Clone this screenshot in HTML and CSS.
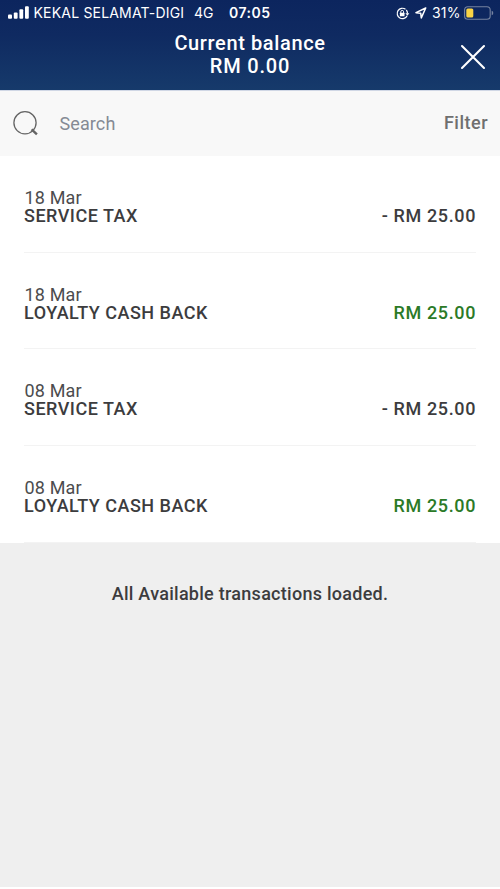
FILE: index.html
```html
<!DOCTYPE html>
<html lang="en">
<head>
<meta charset="utf-8">
<title>Transactions</title>
<link rel="stylesheet" href="styles.css">
</head>
<body>
<div class="app">
  <header class="header">
    <div class="status">
      <svg class="signal" width="21" height="13" viewBox="0 0 21 13" fill="#fff"><rect x="0" y="8.5" width="4" height="4.2" rx="1"/><rect x="5.8" y="6.4" width="3.8" height="6.3" rx="1"/><rect x="11.4" y="3.3" width="3.8" height="9.4" rx="1"/><rect x="17" y="0.2" width="3.8" height="12.5" rx="1"/></svg>
      <span class="carrier">KEKAL SELAMAT-DIGI</span>
      <span class="network">4G</span>
      <span class="time">07:05</span>
      <span class="indicators">
        <svg width="14" height="13" viewBox="0 0 14 13" fill="none"><path d="M11.1 8.7A5.2 5.2 0 1 1 9.5 2.3M10.3 3A5.2 5.2 0 0 1 11.5 6.5" stroke="#fff" stroke-width="1.2"/><path d="M9.4 6.2h3.9l-1.9 2.5z" fill="#fff"/><rect x="3.9" y="5.7" width="4.6" height="3.6" rx=".5" fill="#fff"/><path d="M4.8 6V4.8a1.4 1.4 0 0 1 2.8 0V6" stroke="#fff"/></svg>
        <svg class="arrow" width="12" height="12" viewBox="0 0 12 12"><path d="M10.7 1 1 5.7l4.7.5.6 4.7z" fill="none" stroke="#fff" stroke-width="1.5" stroke-linejoin="round"/></svg>
        <span class="percent">31%</span>
        <svg width="30" height="14" viewBox="0 0 30 14"><rect x=".6" y=".8" width="25.6" height="12.4" rx="3.3" fill="none" stroke="#7583a0" stroke-width="1.1"/><rect x="2.3" y="2.5" width="7" height="9" rx="1.5" fill="#fad445"/><path d="M27.7 4.8q1.6.5 1.6 2.2t-1.6 2.2z" fill="#7583a0"/></svg>
      </span>
    </div>
    <div class="titlebar">
      <div class="title"><div class="title-label">Current balance</div><div class="title-value">RM 0.00</div></div>
      <svg class="close" width="26" height="26" viewBox="0 0 26 26"><path d="M2 2 24 24M24 2 2 24" stroke="#fff" stroke-width="2.1" stroke-linecap="round"/></svg>
    </div>
  </header>
  <div class="search">
    <svg width="26" height="26" viewBox="0 0 26 26" fill="none" stroke="#646464"><circle cx="12" cy="11.8" r="11.1" stroke-width="1.3"/><path d="m18.6 18.4 5.3 5" stroke-width="2.4"/></svg>
    <span class="search-text">Search</span>
    <span class="filter">Filter</span>
  </div>
  <main class="list">
    <div class="row"><div><div class="date">18 Mar</div><div class="name">SERVICE TAX</div></div><div class="amount">- RM 25.00</div></div>
    <div class="row"><div><div class="date">18 Mar</div><div class="name">LOYALTY CASH BACK</div></div><div class="amount credit">RM 25.00</div></div>
    <div class="row"><div><div class="date">08 Mar</div><div class="name">SERVICE TAX</div></div><div class="amount">- RM 25.00</div></div>
    <div class="row"><div><div class="date">08 Mar</div><div class="name">LOYALTY CASH BACK</div></div><div class="amount credit">RM 25.00</div></div>
  </main>
  <footer class="footer">All Available transactions loaded.</footer>
</div>
</body>
</html>
```
FILE: styles.css
```css
* { box-sizing: border-box; }
body { margin: 0; background: #fff; font-family: Roboto, sans-serif; color: #3c3c3e; }
svg { display: block; flex: none; }
.app { width: 500px; height: 889px; display: flex; flex-direction: column; white-space: nowrap; overflow: hidden; }
.header { height: 91px; flex: none; background: linear-gradient(#0c255e 0, #0f2a61 35px, #163a6b 90px); border-bottom: 1px solid #d0d7e5; color: #fff; }
.status { height: 26px; display: flex; align-items: center; padding: 0 6px 0 8px; font: 400 14px/26px Inter, sans-serif; }
.signal { margin-top: -2px; }
.carrier { margin-left: 4.5px; width: 160.5px; letter-spacing: .19px; }
.network { width: 35px; }
.time { font-weight: 600; letter-spacing: .5px; }
.indicators { margin-left: auto; display: flex; align-items: center; }
.arrow { margin-left: 5px; }
.percent { margin-left: 5px; width: 32px; letter-spacing: .2px; }
.titlebar { height: 64px; display: grid; grid-template-columns: 60px 1fr 60px; padding-top: 6px; }
.title { grid-column: 2; text-align: center; font-size: 20px; line-height: 23px; font-weight: 500; }
.title-label { letter-spacing: .62px; }
.title-value { letter-spacing: .8px; }
.close { margin: 12px 0 0 20px; }
.search { height: 65px; flex: none; background: #f8f8f8; display: flex; align-items: center; padding: 0 12px 0 13px; font-size: 18px; }
.search-text { margin-left: 20.5px; color: #858a94; letter-spacing: .1px; }
.filter { margin: -2px 0 0 auto; font-weight: 500; color: #6f6f6f; letter-spacing: .5px; }
.list { height: 387px; flex: none; padding: 0 24px; display: grid; grid-template-rows: repeat(4, 96.67px); }
.row { border-bottom: 1px solid #f3f3f3; display: flex; justify-content: space-between; align-items: flex-end; padding-bottom: 26.6px; font-size: 18px; line-height: 18px; }
.date { letter-spacing: .15px; padding-left: .5px; color: #4c4c4e; }
.name { font-weight: 500; letter-spacing: .5px; }
.amount { font-weight: 500; letter-spacing: .62px; }
.credit { color: #2b7a27; }
.footer { height: 344px; flex: none; background: #efefef; padding-top: 40px; text-align: center; font-size: 18px; line-height: 21px; font-weight: 500; letter-spacing: .27px; }
```
